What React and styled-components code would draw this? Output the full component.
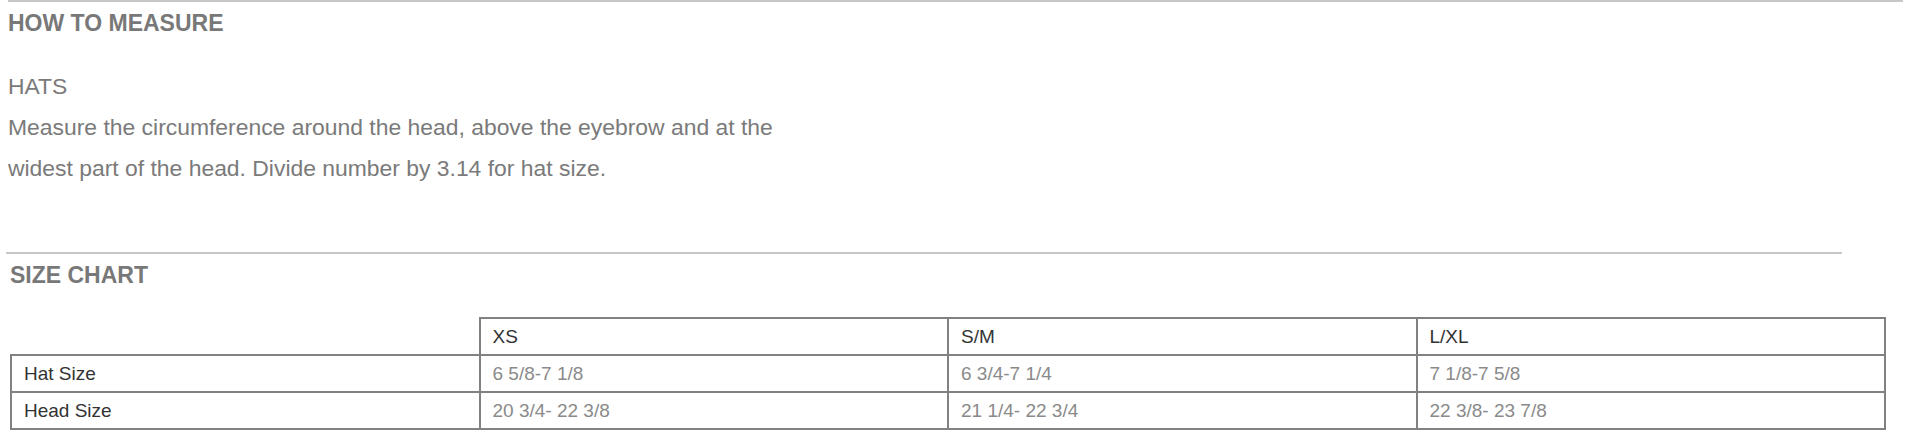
import React from 'react'
import styled, { createGlobalStyle } from 'styled-components'

const GlobalStyle = createGlobalStyle`
    body {
        margin: 0;
        background: #fff;
        font-family: "Liberation Sans", Arial, sans-serif;
    }
`

const Page = styled.div`
    width: 1916px;
    height: 432px;
    overflow: hidden;
`

const Section = styled.section`
    border-top: 2px solid #c8c8c8;
    margin-left: ${props => props.$left}px;
    width: ${props => props.$width}px;
    margin-top: ${props => props.$top || 0}px;
`

const Heading = styled.h3`
    margin: 10px 0 0 ${props => props.$indent || 0}px;
    font-size: 23px;
    line-height: 22px;
    font-weight: bold;
    color: #787878;
`

const Copy = styled.div`
    margin-top: 32px;
    font-size: 22.9px;
    line-height: 41px;
    color: #7a7a7a;
`

const Table = styled.table`
    margin: 31px 0 0 4px;
    width: 1876px;
    border-collapse: collapse;
    table-layout: fixed;
    font-size: 19px;
`

const Cell = styled.td`
    height: 35px;
    padding: 0 12px;
    border: 2px solid #818181;
    color: ${props => (props.$value ? '#8a8a8a' : '#333')};
    vertical-align: middle;
    ${props => props.$blank && 'border: none;'}
`

const sizes = [
  { label: 'Hat Size', values: ['6 5/8-7 1/8', '6 3/4-7 1/4', '7 1/8-7 5/8'] },
  { label: 'Head Size', values: ['20 3/4- 22 3/8', '21 1/4- 22 3/4', '22 3/8- 23 7/8'] },
]

const App = () => {
  return (
    <Page>
      <GlobalStyle />
      <Section $left={8} $width={1895}>
        <Heading>HOW TO MEASURE</Heading>
        <Copy>
          HATS<br />
          Measure the circumference around the head, above the eyebrow and at the<br />
          widest part of the head. Divide number by 3.14 for hat size.
        </Copy>
      </Section>
      <Section $left={6} $width={1836} $top={63}>
        <Heading $indent={4}>SIZE CHART</Heading>
        <Table>
          <tbody>
            <tr>
              <Cell $blank />
              <Cell>XS</Cell>
              <Cell>S/M</Cell>
              <Cell>L/XL</Cell>
            </tr>
            {sizes.map(row => (
              <tr key={row.label}>
                <Cell>{row.label}</Cell>
                {row.values.map(v => (
                  <Cell $value key={v}>{v}</Cell>
                ))}
              </tr>
            ))}
          </tbody>
        </Table>
      </Section>
    </Page>
  )
}

export default App
